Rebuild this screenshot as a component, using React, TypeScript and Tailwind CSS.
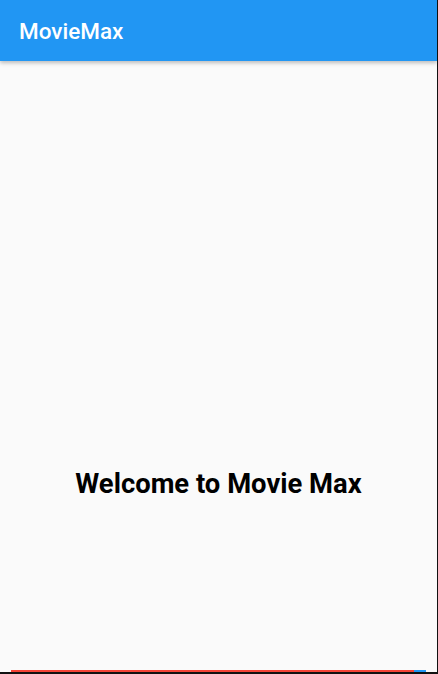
import React from 'react';

export default function App() {
    return (
        <div className="flex h-[674px] w-[438px] flex-col border-r border-[#111] bg-[#fafafa] font-['Roboto',sans-serif]">
            <header className="relative z-10 flex h-[61px] shrink-0 items-center bg-[#2196f3] px-[19px] pt-[2px] shadow-[0_2px_4px_rgba(0,0,0,0.25)]">
                <h1 className="text-[22.5px] font-medium leading-none text-white">MovieMax</h1>
            </header>

            <main className="flex flex-1 flex-col items-center pt-[410px]">
                <h2 className="text-[27.4px] font-bold leading-none text-black">Welcome to Movie Max</h2>
            </main>

            <div className="ml-[11px] flex h-[2px] w-[415px] shrink-0">
                <div className="flex-1 bg-[#f44336]" />
                <div className="w-[12px] bg-[#2196f3]" />
            </div>
            <div className="h-[2px] shrink-0 bg-[#111]" />
        </div>
    );
}
